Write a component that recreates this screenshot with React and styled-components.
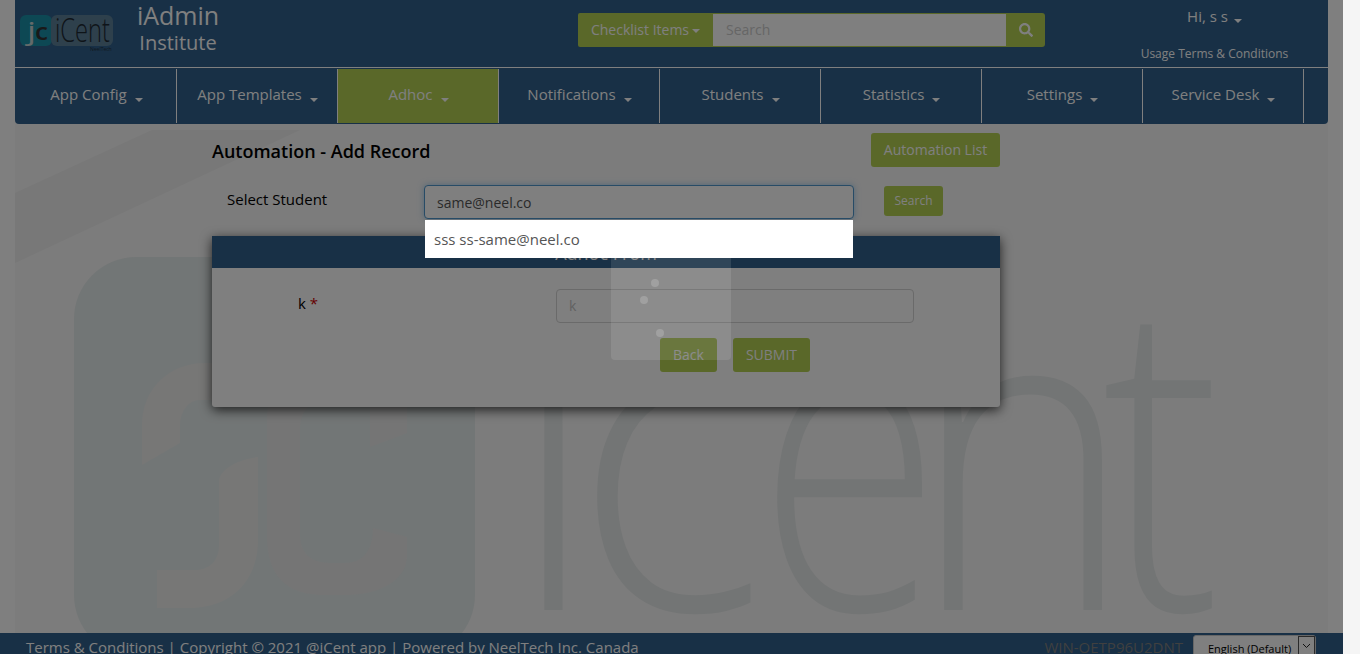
import React from 'react'
import styled, { createGlobalStyle } from 'styled-components'
import { FaSearch } from 'react-icons/fa'

const navy = '#30608c'
const olive = '#b4d052'

const GlobalStyle = createGlobalStyle`
  html, body { margin: 0; padding: 0; height: 100%; overflow: hidden; }
  body { font-family: "Open Sans", "Liberation Sans", sans-serif; font-size: 14px; color: #000; background: #f5f5f5; }
  * { box-sizing: border-box; }
`

const Shell = styled.div`
  display: flex;
  height: 100vh;
`

const Page = styled.div`
  position: relative;
  isolation: isolate;
  width: 1343px;
  height: 100%;
  display: flex;
  flex-direction: column;
  background: #fff;
  overflow: hidden;
`

const ScrollTrack = styled.div`
  flex: 1;
  background: #f5f5f5;
`

const Watermark = styled.svg`
  position: absolute;
  inset: 0;
  z-index: -1;
`

const Overlay = styled.div`
  position: absolute;
  inset: 0;
  z-index: 10;
  background: rgba(0, 0, 0, 0.5);
`

const Header = styled.header`
  margin: 0 15px;
  background: ${navy};
  border-radius: 0 0 4px 4px;
  color: #fff;
`

const TopBar = styled.div`
  display: grid;
  grid-template-columns: 107px 112px 344px 467px 1fr;
  height: 68px;
  border-bottom: 1px solid #fff;
`

const LogoBox = styled.div`
  padding: 13px 0 0 5px;
`

const Brand = styled.div`
  text-align: center;
  white-space: nowrap;
`

const BrandName = styled.div`
  font-size: 25px;
  line-height: 30px;
`

const BrandSub = styled.div`
  font-size: 20px;
  line-height: 26px;
`

const Spacer = styled.div``

const SearchGroup = styled.div`
  display: flex;
  height: 34px;
  margin-top: 13px;
`

const ChecklistButton = styled.div`
  width: 135px;
  background: ${olive};
  text-align: center;
  line-height: 34px;
  border-radius: 2px 0 0 2px;
  white-space: nowrap;
`

const SearchInput = styled.div`
  flex: 1;
  background: #fff;
  color: #ccc;
  padding-left: 13px;
  line-height: 32px;
  border: 1px solid ${olive};
  border-left: 0;
  border-right: 0;
`

const SearchButton = styled.div`
  width: 39px;
  background: ${olive};
  display: flex;
  align-items: center;
  justify-content: center;
  border-radius: 0 3px 3px 0;
`

const UserBox = styled.div`
  padding-left: 56px;
  text-align: center;
  white-space: nowrap;
`

const Greeting = styled.div`
  font-size: 15px;
  line-height: 20px;
  margin-top: 6px;
`

const UsageLink = styled.div`
  font-size: 12px;
  line-height: 16px;
  margin-top: 20px;
`

const Caret = styled.span`
  display: inline-block;
  width: 0;
  height: 0;
  margin-left: ${(p) => p.$gap || 8}px;
  vertical-align: middle;
  border-top: 4px solid #fff;
  border-left: 4px solid transparent;
  border-right: 4px solid transparent;
  transform: translateY(${(p) => p.$drop || 0}px);
`

const Nav = styled.nav`
  display: flex;
  height: 56px;
  padding: 0 0 1px 1px;
`

const NavItem = styled.div`
  border-right: 1px solid #fff;
  margin-top: 1px;
  background: ${(p) => (p.$active ? olive : 'transparent')};
  border-left: ${(p) => (p.$active ? '1px solid #fff' : '0')};
  margin-left: ${(p) => (p.$active ? '-1px' : '0')};
  width: ${(p) => (p.$active ? '162px' : '161px')};
  padding-left: 1px;
  font-size: 15px;
  line-height: 50px;
  text-align: center;
  white-space: nowrap;
`

const Main = styled.main`
  flex: 1;
  width: 788px;
  margin-left: 212px;
  padding-top: 9px;
`

const TitleRow = styled.div`
  display: flex;
  justify-content: space-between;
  align-items: center;
  height: 34px;
`

const Title = styled.h1`
  margin: 0;
  font-size: 18px;
  font-weight: 600;
  line-height: 38px;
  padding-top: 2px;
`

const OliveButton = styled.button`
  height: ${(p) => p.$height || 34}px;
  width: ${(p) => p.$width}px;
  padding: 0 0 2px;
  border: 0;
  border-radius: 3px;
  background: ${olive};
  color: #fff;
  font-family: inherit;
  font-size: ${(p) => p.$size || 14}px;
`

const SelectRow = styled.div`
  display: grid;
  grid-template-columns: 212px 430px 59px;
  margin-top: 18px;
  height: 34px;
`

const SelectLabel = styled.label`
  padding-left: 15px;
  line-height: 29px;
  font-size: 15px;
`

const AutoWrap = styled.div`
  position: relative;
`

const StudentInput = styled.div`
  height: 34px;
  border: 1px solid #4f97cc;
  border-radius: 4px;
  background: #fff;
  color: #555;
  padding-left: 12px;
  line-height: 34px;
  box-shadow: 0 0 6px rgba(102, 175, 233, 0.6);
`

const AutoMenu = styled.div`
  position: absolute;
  z-index: 20;
  top: 35px;
  left: 1px;
  width: 428px;
  height: 38px;
  background: #fff;
  color: #555;
  font-size: 15px;
  line-height: 38px;
  padding-left: 9px;
`

const SearchCell = styled.div`
  margin: 1px 0 0 30px;
`

const Panel = styled.section`
  margin-top: 17px;
  height: 171px;
  background: #fff;
  box-shadow: 0 3px 12px rgba(0, 0, 0, 0.75);
  border-radius: 0 0 3px 3px;
`

const PanelHead = styled.div`
  height: 32px;
  background: ${navy};
  color: #fff;
  font-size: 18px;
  line-height: 34px;
  text-align: center;
`

const FieldRow = styled.div`
  display: grid;
  grid-template-columns: 344px 358px;
  margin-top: 21px;
`

const FieldLabel = styled.label`
  padding-left: 86px;
  font-size: 15px;
  line-height: 28px;
`

const Required = styled.span`
  color: #c00;
`

const FieldInput = styled.div`
  height: 34px;
  border: 1px solid #d4d4d4;
  border-radius: 4px;
  color: #c4c4c4;
  padding-left: 12px;
  line-height: 32px;
`

const ButtonRow = styled.div`
  display: flex;
  gap: 16px;
  margin: 15px 0 0 448px;
`

const Spinner = styled.div`
  position: absolute;
  z-index: 15;
  left: 611px;
  top: 240px;
  width: 120px;
  height: 120px;
  border-radius: 4px;
  background: rgba(255, 255, 255, 0.1);
`

const Dot = styled.i`
  position: absolute;
  left: ${(p) => p.$x}px;
  top: ${(p) => p.$y}px;
  width: 8px;
  height: 8px;
  border-radius: 50%;
  background: #a0a0a0;
`

const Footer = styled.footer`
  height: 21px;
  flex: none;
  background: ${navy};
  color: #fff;
  display: flex;
  align-items: flex-start;
  padding: 3px 27px 0 26px;
  font-size: 15px;
  line-height: 22px;
  white-space: nowrap;
  overflow: hidden;
`

const FooterText = styled.div`
  flex: 1;
`

const ServerName = styled.div`
  color: #808080;
  margin-right: 10px;
`

const LangSelect = styled.div`
  width: 123px;
  height: 30px;
  margin-top: -1px;
  background: #fff;
  border: 1px solid #ccc;
  border-radius: 3px;
  display: flex;
  justify-content: space-between;
  font-size: 11px;
  line-height: 26px;
  color: #000;
  padding-left: 14px;
`

const LangArrow = styled.span`
  width: 17px;
  height: 20px;
  border: 1px solid #555;
  display: flex;
  justify-content: center;
  padding-top: 6px;
`

const navItems = ['App Config', 'App Templates', 'Adhoc', 'Notifications', 'Students', 'Statistics', 'Settings', 'Service Desk']

// the big faded wordmark; each letter has its own width in the artwork
const wordmark = [
  { ch: 'i', x: 512, sx: 0.85 },
  { ch: 'c', x: 574, sx: 0.93 },
  { ch: 'e', x: 758, sx: 0.77 },
  { ch: 'n', x: 911, sx: 0.87 },
  { ch: 't', x: 1102, sx: 0.82 },
]

const Logo = () => (
  <svg width="95" height="40" viewBox="0 0 95 40">
    <rect x="0" y="2" width="32" height="31" rx="6" fill="#1a90a8" />
    <rect x="31" y="2" width="62" height="31" rx="6" fill="#5c8098" />
    <text x="7" y="27" fontSize="26" fill="#c8d4d4" fontFamily="Open Sans" textLength="9" lengthAdjust="spacingAndGlyphs">j</text>
    <text x="15" y="27" fontSize="24" fontWeight="600" fill="#333" fontFamily="Open Sans" textLength="13" lengthAdjust="spacingAndGlyphs">c</text>
    <text x="35" y="29" fontSize="33" fontWeight="300" fill="#1c2933" fontFamily="Open Sans" textLength="55" lengthAdjust="spacingAndGlyphs">iCent</text>
    <text x="70" y="38" fontSize="5" fill="#22313c" fontFamily="Open Sans">NeelTech</text>
  </svg>
)

const PageWatermark = () => (
  <Watermark width="1343" height="654" viewBox="0 0 1343 654">
    <rect x="15" y="0" width="1313" height="654" fill="#f8f8f8" />
    <polygon points="15,193 152,130 300,130 15,263" fill="#f0f0f0" />
    <rect x="74" y="257" width="401" height="400" rx="62" fill="#e5ecec" />
    <path d="M142 465 V425 C142 390 168 363 205 363 H300 V400 H200 C188 400 180 412 180 427 V443 Z" fill="#eeeeec" />
    <path d="M219 480 C222 468 238 460 258 457 V540 C258 582 230 608 190 608 H157 V570 H195 C210 570 219 560 219 545 Z" fill="#efefec" />
    <path d="M267 420 C267 380 290 363 330 363 H407 V433 L370 447 V400 H330 C310 400 300 410 300 430 V535 C300 552 310 563 330 563 H345 C362 563 373 552 373 528 L407 537 V555 C407 580 380 595 345 595 H325 C285 595 267 575 267 535 Z" fill="#ebebeb" />
    {wordmark.map((l) => (
      <text key={l.ch} transform={`translate(${l.x} 610) scale(${l.sx} 1)`} fontSize="433" fontWeight="300" fontFamily="Open Sans" fill="#e6eaea">{l.ch}</text>
    ))}
  </Watermark>
)

export default function App() {
  return (
    <Shell>
      <GlobalStyle />
      <Page>
        <PageWatermark />
        <Header>
          <TopBar>
            <LogoBox><Logo /></LogoBox>
            <Brand>
              <BrandName>iAdmin</BrandName>
              <BrandSub>Institute</BrandSub>
            </Brand>
            <Spacer />
            <SearchGroup>
              <ChecklistButton>Checklist Items<Caret $gap={3} /></ChecklistButton>
              <SearchInput>Search</SearchInput>
              <SearchButton><FaSearch size={14} color="#fff" /></SearchButton>
            </SearchGroup>
            <UserBox>
              <Greeting>Hi, s s<Caret $gap={6} $drop={3} /></Greeting>
              <UsageLink>Usage Terms &amp; Conditions</UsageLink>
            </UserBox>
          </TopBar>
          <Nav>
            {navItems.map((item) => (
              <NavItem key={item} $active={item === 'Adhoc'}>
                {item}<Caret $drop={4} />
              </NavItem>
            ))}
          </Nav>
        </Header>

        <Main>
          <TitleRow>
            <Title>Automation - Add Record</Title>
            <OliveButton $width={129}>Automation List</OliveButton>
          </TitleRow>

          <SelectRow>
            <SelectLabel>Select Student</SelectLabel>
            <AutoWrap>
              <StudentInput>same@neel.co</StudentInput>
              <AutoMenu>sss ss-same@neel.co</AutoMenu>
            </AutoWrap>
            <SearchCell>
              <OliveButton $width={59} $height={30} $size={12}>Search</OliveButton>
            </SearchCell>
          </SelectRow>

          <Panel>
            <PanelHead>Adhoc From</PanelHead>
            <FieldRow>
              <FieldLabel>k <Required>*</Required></FieldLabel>
              <FieldInput>k</FieldInput>
            </FieldRow>
            <ButtonRow>
              <OliveButton $width={57}>Back</OliveButton>
              <OliveButton $width={77}>SUBMIT</OliveButton>
            </ButtonRow>
          </Panel>
        </Main>

        <Footer>
          <FooterText>Terms &amp; Conditions | Copyright © 2021 @iCent app | Powered by NeelTech Inc. Canada</FooterText>
          <ServerName>WIN-OETP96U2DNT</ServerName>
          <LangSelect>
            English (Default)
            <LangArrow>
              <svg width="9" height="6" viewBox="0 0 9 6"><path d="M1 1l3.5 3.5L8 1" fill="none" stroke="#222" strokeWidth="1" /></svg>
            </LangArrow>
          </LangSelect>
        </Footer>

        <Overlay />
        <Spinner>
          <Dot $x={40} $y={39} />
          <Dot $x={29} $y={56} />
          <Dot $x={45} $y={89} />
        </Spinner>
      </Page>
      <ScrollTrack />
    </Shell>
  )
}
